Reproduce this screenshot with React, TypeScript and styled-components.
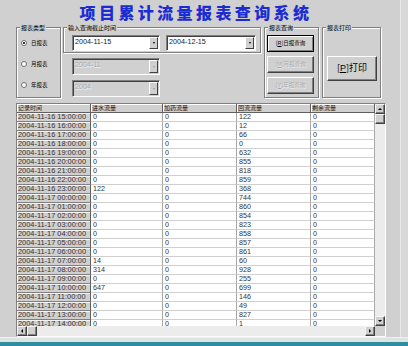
import React from 'react';
import styled, { createGlobalStyle, css } from 'styled-components';

const Global = createGlobalStyle`
  html, body { margin: 0; padding: 0; background: #d0d0d0; }
  body { width: 408px; height: 346px; overflow: hidden; font-family: "Noto Sans CJK SC", sans-serif; }
`;

const CJK = `"Noto Sans CJK SC", "Liberation Sans", sans-serif`;
const NUM = `"Liberation Sans", "Noto Sans CJK SC", sans-serif`;

const Window = styled.div`
  width: 408px;
  height: 346px;
  display: flex;
  flex-direction: column;
  background: #d0d0d0;
  overflow: hidden;
`;

const Main = styled.div`
  flex: 1;
  display: flex;
  min-height: 0;
`;

const Form = styled.div`
  width: 400px;
  display: flex;
  flex-direction: column;
  padding-left: 16px;
  box-sizing: border-box;
`;

const RightEdge = styled.div`
  flex: 1;
  background: #d8d8d8;
  border-left: 1px solid #e8e8e8;
`;

const BottomBand = styled.div`
  height: 5px;
  background: #e2e2e2;
  border-top: 1px solid #f0f0f0;
  box-sizing: border-box;
`;

const Taskbar = styled.div`
  height: 4px;
  background: #2f8e9d;
`;

const TitleBar = styled.div`
  height: 27px;
  display: flex;
  justify-content: center;
  align-items: flex-start;
  padding-right: 24px;
  box-sizing: border-box;
`;

const Title = styled.h1`
  margin: 0;
  font-family: ${CJK};
  font-weight: 900;
  font-size: 16px;
  letter-spacing: 3.4px;
  line-height: 24px;
  color: #1b2cd3;
  white-space: nowrap;
`;

const Controls = styled.div`
  height: 71px;
  display: flex;
  align-items: flex-start;
`;

const GroupBox = styled.div<{ $w: number; $h: number; $ml?: number }>`
  position: relative;
  box-sizing: border-box;
  width: ${p => p.$w}px;
  height: ${p => p.$h}px;
  margin-left: ${p => p.$ml ?? 0}px;
  border: 1px solid #808080;
  box-shadow: inset 1px 1px 0 #fff, 1px 1px 0 #fff;
`;

const Caption = styled.span`
  position: absolute;
  top: -5px;
  left: 3px;
  padding: 0 1px;
  background: #d0d0d0;
  font-family: ${CJK};
  font-size: 6px;
  line-height: 9px;
  color: #000;
  white-space: nowrap;
`;

const RadioList = styled.div`
  display: flex;
  flex-direction: column;
  gap: 11px;
  padding: 10px 0 0 4px;
`;

const RadioRow = styled.label`
  display: flex;
  align-items: center;
  gap: 4px;
  height: 10px;
  font-family: ${CJK};
  font-size: 5.5px;
  color: #000;
`;

const RadioDot = styled.span<{ $on?: boolean }>`
  width: 6px;
  height: 6px;
  box-sizing: border-box;
  border-radius: 50%;
  background: #fff;
  border: 1px solid #707070;
  display: flex;
  align-items: center;
  justify-content: center;
  &::after {
    content: '';
    width: 2px;
    height: 2px;
    border-radius: 50%;
    background: ${p => (p.$on ? '#000' : 'transparent')};
  }
`;

const DateColumn = styled.div`
  width: 198px;
  margin-left: 2px;
  display: flex;
  flex-direction: column;
`;

const ComboRow = styled.div`
  display: flex;
  gap: 6px;
  padding: 7px 0 0 8px;
`;

const Combo = styled.div<{ $w: number; $disabled?: boolean }>`
  width: ${p => p.$w}px;
  height: ${p => (p.$disabled ? 17 : 16)}px;
  box-sizing: border-box;
  display: flex;
  align-items: stretch;
  border: 1px solid;
  border-color: #808080 #fff #fff #808080;
  box-shadow: inset 1px 1px 0 #404040;
  background: ${p => (p.$disabled ? '#d0d0d0' : '#fff')};
`;

const ComboText = styled.span<{ $disabled?: boolean }>`
  flex: 1;
  padding: 0 0 0 2px;
  font-family: ${NUM};
  font-size: 7.2px;
  line-height: 12px;
  color: ${p => (p.$disabled ? '#a8a8a8' : '#222')};
  text-shadow: ${p => (p.$disabled ? '0.5px 0.5px 0 #f4f4f4' : 'none')};
`;

const DropButton = styled.span<{ $disabled?: boolean }>`
  width: 9px;
  margin: 1px 1px 1px 0;
  box-sizing: border-box;
  background: #d0d0d0;
  border: 1px solid;
  border-color: #fff #404040 #404040 #fff;
  display: flex;
  align-items: center;
  justify-content: center;
  &::after {
    content: '';
    border-left: 1.5px solid transparent;
    border-right: 1.5px solid transparent;
    border-top: 2px solid ${p => (p.$disabled ? '#a0a0a0' : '#000')};
  }
`;

const DisabledStack = styled.div`
  display: flex;
  flex-direction: column;
  gap: 5px;
  margin: 5px 0 0 9px;
`;

const ButtonStack = styled.div`
  display: flex;
  flex-direction: column;
  gap: 4px;
  padding: 7px 0 0 2px;
`;

const WinButton = styled.button<{ $w: number; $h: number; $size: number; $disabled?: boolean; $default?: boolean }>`
  width: ${p => p.$w}px;
  height: ${p => p.$h}px;
  box-sizing: border-box;
  padding: 0;
  margin: 0;
  background: #d0d0d0;
  border: 1px solid;
  border-color: #fff #404040 #404040 #fff;
  box-shadow: inset -1px -1px 0 #808080;
  font-family: ${CJK};
  font-size: ${p => p.$size}px;
  line-height: 1;
  color: ${p => (p.$disabled ? '#a8a8a8' : '#000')};
  text-shadow: ${p => (p.$disabled ? '0.5px 0.5px 0 #f4f4f4' : 'none')};
  white-space: nowrap;
  ${p =>
    p.$default &&
    css`
      border-color: #000;
      box-shadow: inset 1px 1px 0 #fff, inset -1px -1px 0 #808080;
    `}
`;

const Key = styled.span`
  text-decoration: underline;
  font-family: "Liberation Sans", sans-serif;
`;

const PrintBody = styled.div`
  padding: 24px 0 0 4px;
`;

const GridFrame = styled.div`
  margin-top: 5px;
  width: 370px;
  height: 234px;
  box-sizing: border-box;
  border: 1px solid;
  border-color: #808080 #fff #fff #808080;
  display: flex;
  flex-direction: column;
  background: #fff;
`;

const GridTop = styled.div`
  flex: 1;
  display: flex;
  min-height: 0;
`;

const Table = styled.div`
  flex: 1;
  display: grid;
  grid-template-columns: 74px 72px 74px 74px 64px;
  grid-auto-rows: 9px;
  overflow: hidden;
  align-content: start;
`;

const cellBase = css`
  box-sizing: border-box;
  padding-left: 1px;
  white-space: nowrap;
  overflow: hidden;
`;

const HeadCell = styled.div`
  ${cellBase};
  background: #d0d0d0;
  color: #111;
  border-right: 1px solid #606060;
  border-bottom: 1px solid #606060;
  box-shadow: inset 1px 1px 0 #fff;
  font-family: ${CJK};
  font-size: 6px;
  line-height: 8px;
`;

const RowHead = styled.div`
  ${cellBase};
  background: #d0d0d0;
  color: #333;
  border-right: 1px solid #606060;
  border-bottom: 1px solid #808080;
  box-shadow: inset 1px 1px 0 #f4f4f4;
  font-family: ${NUM};
  font-size: 7.4px;
  line-height: 8px;
`;

const Cell = styled.div`
  ${cellBase};
  background: #fff;
  color: #333;
  border-right: 1px solid #a8a8a8;
  border-bottom: 1px solid #d0d0d0;
  font-family: ${NUM};
  font-size: 7.2px;
  line-height: 8px;
  padding-left: 2px;
`;

const VScroll = styled.div`
  width: 10px;
  display: flex;
  flex-direction: column;
  background: #ececec;
`;

const HScrollRow = styled.div`
  height: 10px;
  display: flex;
`;

const HScroll = styled.div`
  flex: 1;
  display: flex;
  background: #ececec;
`;

const Track = styled.div`
  flex: 1;
`;

const Corner = styled.div`
  width: 10px;
  background: #d0d0d0;
`;

const ScrollBtn = styled.div<{ $dir?: 'up' | 'down' | 'left' | 'right' }>`
  width: 10px;
  height: 10px;
  box-sizing: border-box;
  background: #d0d0d0;
  border: 1px solid;
  border-color: #f4f4f4 #404040 #404040 #f4f4f4;
  box-shadow: inset -1px -1px 0 #808080;
  display: flex;
  align-items: center;
  justify-content: center;
  &::after {
    content: '';
    ${p =>
      p.$dir === 'up'
        ? css`border-left: 2px solid transparent; border-right: 2px solid transparent; border-bottom: 2px solid #000;`
        : p.$dir === 'down'
        ? css`border-left: 2px solid transparent; border-right: 2px solid transparent; border-top: 2px solid #000;`
        : p.$dir === 'left'
        ? css`border-top: 2px solid transparent; border-bottom: 2px solid transparent; border-right: 2px solid #000;`
        : p.$dir === 'right'
        ? css`border-top: 2px solid transparent; border-bottom: 2px solid transparent; border-left: 2px solid #000;`
        : css`display: none;`}
  }
`;

type Row = [string, string, string, string, string];

const rows: Row[] = [
  ['2004-11-16 15:00:00', '0', '0', '122', '0'],
  ['2004-11-16 16:00:00', '0', '0', '12', '0'],
  ['2004-11-16 17:00:00', '0', '0', '66', '0'],
  ['2004-11-16 18:00:00', '0', '0', '0', '0'],
  ['2004-11-16 19:00:00', '0', '0', '632', '0'],
  ['2004-11-16 20:00:00', '0', '0', '855', '0'],
  ['2004-11-16 21:00:00', '0', '0', '818', '0'],
  ['2004-11-16 22:00:00', '0', '0', '859', '0'],
  ['2004-11-16 23:00:00', '122', '0', '368', '0'],
  ['2004-11-17 00:00:00', '0', '0', '744', '0'],
  ['2004-11-17 01:00:00', '0', '0', '860', '0'],
  ['2004-11-17 02:00:00', '0', '0', '854', '0'],
  ['2004-11-17 03:00:00', '0', '0', '823', '0'],
  ['2004-11-17 04:00:00', '0', '0', '858', '0'],
  ['2004-11-17 05:00:00', '0', '0', '857', '0'],
  ['2004-11-17 06:00:00', '0', '0', '861', '0'],
  ['2004-11-17 07:00:00', '14', '0', '60', '0'],
  ['2004-11-17 08:00:00', '314', '0', '928', '0'],
  ['2004-11-17 09:00:00', '0', '0', '255', '0'],
  ['2004-11-17 10:00:00', '647', '0', '699', '0'],
  ['2004-11-17 11:00:00', '0', '0', '146', '0'],
  ['2004-11-17 12:00:00', '0', '0', '49', '0'],
  ['2004-11-17 13:00:00', '0', '0', '827', '0'],
  ['2004-11-17 14:00:00', '0', '0', '1', '0'],
];

const headers = ['记录时间', '进水流量', '加药流量', '回流流量', '剩余流量'];

export default function App() {
  return (
    <>
      <Global />
      <Window>
        <Main>
          <Form>
            <TitleBar>
              <Title>项目累计流量报表查询系统</Title>
            </TitleBar>
            <Controls>
              <GroupBox $w={45} $h={71}>
                <Caption>报表类型</Caption>
                <RadioList>
                  <RadioRow><RadioDot $on />日报表</RadioRow>
                  <RadioRow><RadioDot />月报表</RadioRow>
                  <RadioRow><RadioDot />年报表</RadioRow>
                </RadioList>
              </GroupBox>
              <DateColumn>
                <GroupBox $w={198} $h={26}>
                  <Caption>输入查询截止时间</Caption>
                  <ComboRow>
                    <Combo $w={88}>
                      <ComboText>2004-11-15</ComboText>
                      <DropButton />
                    </Combo>
                    <Combo $w={90}>
                      <ComboText>2004-12-15</ComboText>
                      <DropButton />
                    </Combo>
                  </ComboRow>
                </GroupBox>
                <DisabledStack>
                  <Combo $w={88} $disabled>
                    <ComboText $disabled>2004-11</ComboText>
                    <DropButton $disabled />
                  </Combo>
                  <Combo $w={88} $disabled>
                    <ComboText $disabled>2004</ComboText>
                    <DropButton $disabled />
                  </Combo>
                </DisabledStack>
              </DateColumn>
              <GroupBox $w={55} $h={71} $ml={3}>
                <Caption>报表查询</Caption>
                <ButtonStack>
                  <WinButton $w={47} $h={17} $size={5.5} $default>[<Key>R</Key>]日报查询</WinButton>
                  <WinButton $w={47} $h={17} $size={5.5} $disabled>[<Key>M</Key>]月报查询</WinButton>
                  <WinButton $w={47} $h={17} $size={5.5} $disabled>[<Key>Y</Key>]年报查询</WinButton>
                </ButtonStack>
              </GroupBox>
              <GroupBox $w={59} $h={71} $ml={3}>
                <Caption>报表打印</Caption>
                <PrintBody>
                  <WinButton $w={50} $h={25} $size={9}>[<Key>P</Key>]打印</WinButton>
                </PrintBody>
              </GroupBox>
            </Controls>
            <GridFrame>
              <GridTop>
                <Table>
                  {headers.map(h => (
                    <HeadCell key={h}>{h}</HeadCell>
                  ))}
                  {rows.map(r => (
                    <React.Fragment key={r[0]}>
                      <RowHead>{r[0]}</RowHead>
                      <Cell>{r[1]}</Cell>
                      <Cell>{r[2]}</Cell>
                      <Cell>{r[3]}</Cell>
                      <Cell>{r[4]}</Cell>
                    </React.Fragment>
                  ))}
                </Table>
                <VScroll>
                  <ScrollBtn $dir="up" />
                  <ScrollBtn />
                  <Track />
                  <ScrollBtn $dir="down" />
                </VScroll>
              </GridTop>
              <HScrollRow>
                <HScroll>
                  <ScrollBtn $dir="left" />
                  <ScrollBtn />
                  <Track />
                  <ScrollBtn $dir="right" />
                </HScroll>
                <Corner />
              </HScrollRow>
            </GridFrame>
          </Form>
          <RightEdge />
        </Main>
        <BottomBand />
        <Taskbar />
      </Window>
    </>
  );
}
